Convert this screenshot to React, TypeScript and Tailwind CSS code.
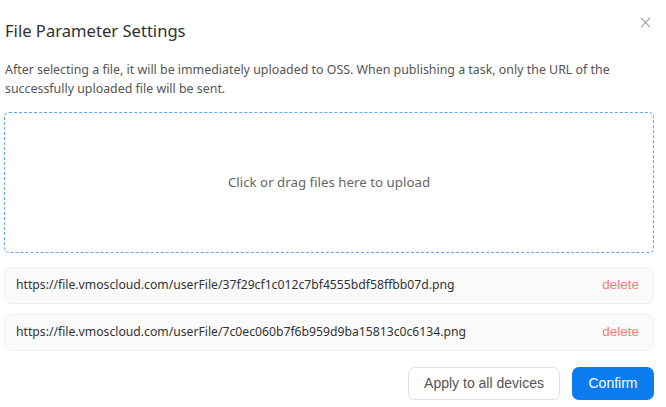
import React from 'react';

const FILES = [
  'https://file.vmoscloud.com/userFile/37f29cf1c012c7bf4555bdf58ffbb07d.png',
  'https://file.vmoscloud.com/userFile/7c0ec060b7f6b959d9ba15813c0c6134.png',
];

export default function App() {
  return (
    <div className="w-[666px] h-[407px] bg-white font-['Noto_Sans',sans-serif] text-[#333] relative overflow-hidden">
      {/* close */}
      <button className="absolute top-[17px] left-[640px] w-[11px] h-[11px] text-[#999]">
        <svg viewBox="0 0 12 12" width="11" height="11" fill="none" stroke="currentColor" strokeWidth="1.1">
          <path d="M1 1L11 11M11 1L1 11" />
        </svg>
      </button>

      <div className="pl-[4px] pr-[12px]">
        <h2 className="pt-[18px] pl-[1px] text-[16.6px] leading-[26px] text-[#303133]">File Parameter Settings</h2>

        <p className="mt-[16px] pl-[1px] text-[12.4px] leading-[19px] text-[#555]">
          After selecting a file, it will be immediately uploaded to OSS. When publishing a task, only the URL of the successfully uploaded file will be sent.
        </p>

        <div className="mt-[14px] h-[141px] border border-dashed border-[#5aa6f7] rounded-[5px] flex items-center justify-center">
          <span className="text-[13.3px] text-[#666]">Click or drag files here to upload</span>
        </div>

        <div className="mt-[14px] flex flex-col gap-[10px]">
          {FILES.map((f) => (
            <div
              key={f}
              className="h-[37px] bg-[#fafafa] border border-[#f0f0f0] rounded-[7px] flex items-center justify-between pl-[11px] pr-[14px]"
            >
              <span className="text-[12.2px] text-[#333]">{f}</span>
              <span className="text-[13.5px] text-[#f77b7b] font-['Liberation_Sans',sans-serif]">delete</span>
            </div>
          ))}
        </div>

        <div className="mt-[16px] flex justify-end gap-[12px] font-['Liberation_Sans',sans-serif]">
          <button className="w-[152px] h-[33px] border border-[#dcdfe6] rounded-[7px] text-[14px] text-[#555] bg-white">
            Apply to all devices
          </button>
          <button className="w-[82px] h-[33px] rounded-[7px] text-[14px] text-white bg-[#0c7bf0]">
            Confirm
          </button>
        </div>
      </div>
    </div>
  );
}
